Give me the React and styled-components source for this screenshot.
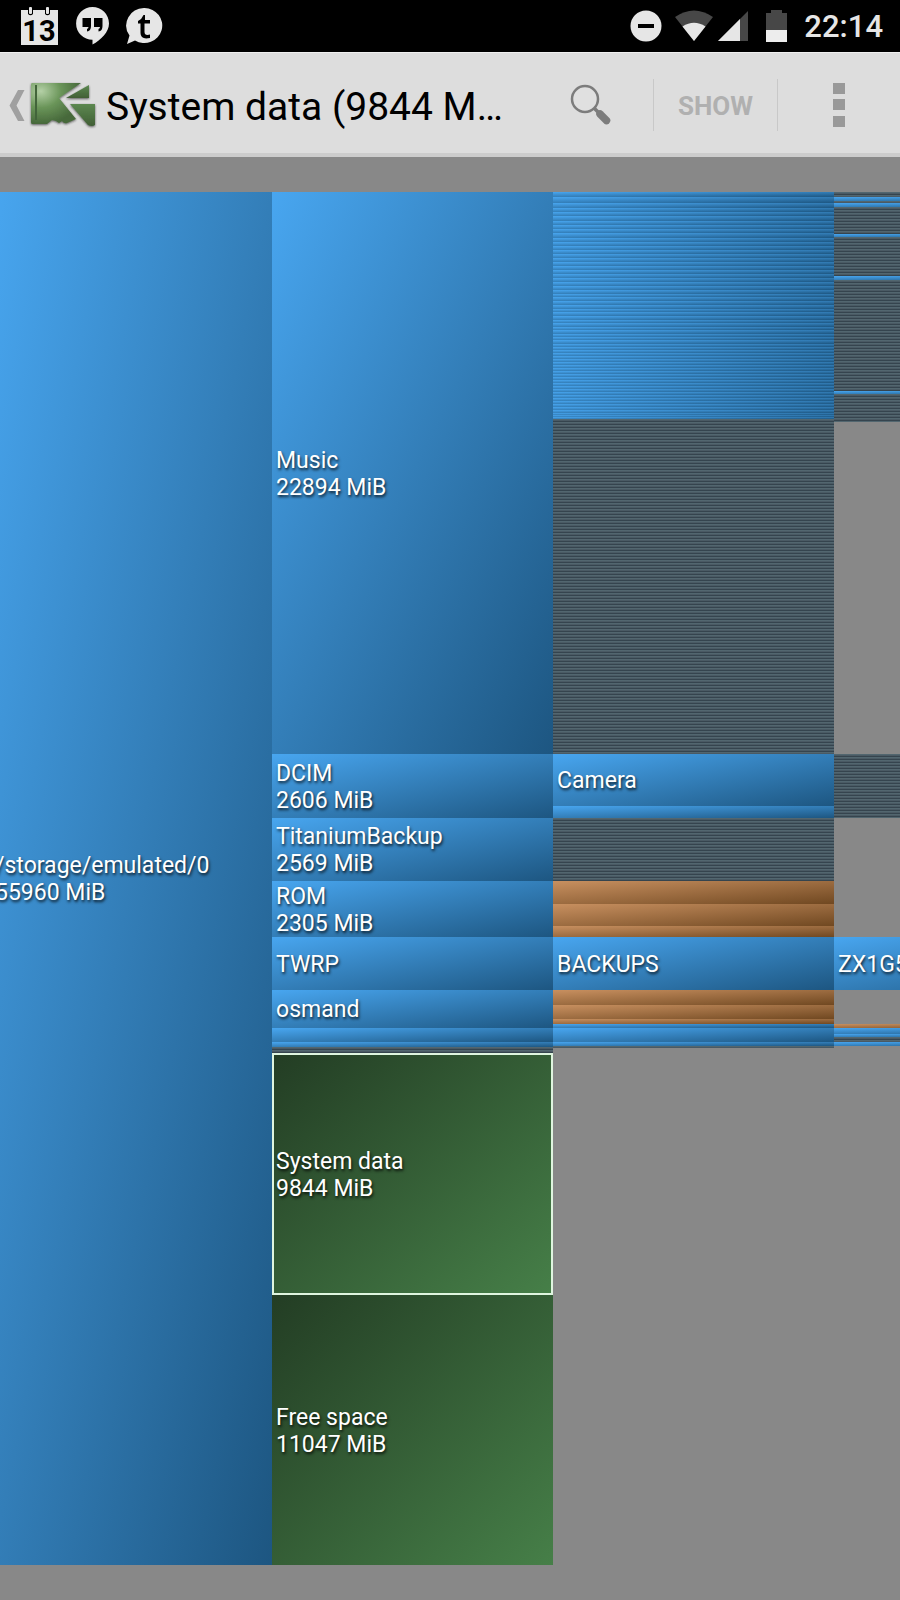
import React from "react";
import styled, { createGlobalStyle, css } from "styled-components";

const GlobalStyle = createGlobalStyle`
  * { box-sizing: border-box; }
  body {
    margin: 0;
    background: #888888;
    font-family: Roboto, "Liberation Sans", sans-serif;
  }
`;

const Page = styled.div`
  min-height: 100vh;
  overflow: hidden;
`;

const StatusBar = styled.header`
  display: flex;
  align-items: center;
  justify-content: space-between;
  height: 52px;
  padding: 0 17px 0 20px;
  background: #000;
  color: #e6e6e6;
`;

const StatusGroup = styled.div`
  display: flex;
  align-items: center;
  gap: ${(p) => p.$gap}px;
`;

const Clock = styled.time`
  padding-top: 2px;
  font-size: 31px;
  font-weight: 500;
  line-height: 50px;
`;

const ActionBar = styled.nav`
  display: flex;
  align-items: center;
  height: 105px;
  padding-top: 4px;
  background: #dddddd;
  border-top: 1px solid #f0f0f0;
  border-bottom: 4px solid #cccccc;
`;

const UpButton = styled.button`
  display: flex;
  align-items: center;
  flex: none;
  padding: 0;
  margin-left: 8px;
  border: 0;
  background: none;
`;

const Title = styled.h1`
  flex: 1;
  min-width: 0;
  margin: 0 0 0 8px;
  padding-top: 3px;
  font-size: 39px;
  font-weight: 400;
  line-height: 48px;
  color: #000;
  white-space: nowrap;
`;

const IconButton = styled.button`
  display: flex;
  align-items: center;
  justify-content: center;
  flex: none;
  width: ${(p) => p.$width}px;
  height: 80px;
  padding: 0;
  border: 0;
  background: none;
`;

const ShowButton = styled.button`
  flex: none;
  width: 125px;
  height: 52px;
  padding: 2px 0 0;
  border: solid #c8c8c8;
  border-width: 0 1px;
  background: none;
  color: #b0b0b0;
  font-family: inherit;
  font-size: 26px;
  font-weight: 700;
`;

const TreeMap = styled.main`
  display: grid;
  grid-template-columns: repeat(4, minmax(0, 1fr));
  width: 124.9%;
  margin: 35px 0 35px -9px;
`;

const Column = styled.div`
  min-width: 0;
`;

const fills = {
  blue: css`background: linear-gradient(to bottom right, #48a6f0, #337eb8 50%, #1d5681);`,
  green: css`background: linear-gradient(to bottom right, #233d24, #467f48);`,
  orange: css`background: linear-gradient(to bottom right, #c89060, #704821);`,
  dark: css`background: repeating-linear-gradient(#52666f 0 1px, #4a5a64 1px 2px, #35444e 2px 3px);`,
  none: css`background: none;`,
};

const Block = styled.section`
  display: flex;
  align-items: center;
  height: ${(p) => p.$height}px;
  padding: ${(p) => (p.$labelled ? "1px 4px 0" : "0")};
  overflow: hidden;
  ${(p) => fills[p.$fill]}
  ${(p) => p.$selected && css`
    border: 2px solid #dff5df;
    padding: 1px 2px 0;
  `}
`;

const Label = styled.p`
  margin: 0;
  font-size: 23px;
  line-height: 27px;
  color: #fff;
  white-space: pre;
  text-shadow: 1px 2px 3px rgba(0, 0, 0, 0.8);
`;

const musicFolders = [
  5, 6, 5, 4, 4, 5, 4, 4, 4, 5, 4, 4, 4, 4, 4, 4, 4, 4, 4, 4, 4, 4, 4, 4, 3, 4,
  4, 4, 3, 4, 4, 3, 4, 3, 4, 3, 3, 4, 3, 3, 3, 3, 3, 3, 3, 3, 3, 3, 3, 3, 3, 3,
  3, 3, 3, 3, 3, 3, 3, 3, 3, 2, 2, 2,
].map((h) => ["blue", h]);

const columns = [
  [["blue", 1373, "/storage/emulated/0\n55960 MiB"]],
  [
    ["blue", 562, "Music\n22894 MiB"],
    ["blue", 64, "DCIM\n2606 MiB"],
    ["blue", 63, "TitaniumBackup\n2569 MiB"],
    ["blue", 56, "ROM\n2305 MiB"],
    ["blue", 53, "TWRP"],
    ["blue", 38, "osmand"],
    ["blue", 14],
    ["blue", 5],
    ["dark", 6],
    ["green", 242, "System data\n9844 MiB", true],
    ["green", 270, "Free space\n11047 MiB"],
  ],
  [
    ...musicFolders,
    ["dark", 335],
    ["blue", 52, "Camera"],
    ["blue", 12],
    ["dark", 63],
    ["orange", 23],
    ["orange", 22],
    ["orange", 11],
    ["blue", 53, "BACKUPS"],
    ["orange", 15],
    ["orange", 14],
    ["orange", 5],
    ["blue", 4],
    ["blue", 14],
    ["blue", 4],
    ["dark", 2],
  ],
  [
    ["dark", 5],
    ["blue", 4],
    ["dark", 2],
    ["blue", 4],
    ["dark", 27],
    ["blue", 3],
    ["dark", 39],
    ["blue", 4],
    ["dark", 111],
    ["blue", 3],
    ["dark", 28],
    ["none", 332],
    ["dark", 64],
    ["none", 119],
    ["blue", 53, "ZX1G5"],
    ["none", 34],
    ["orange", 4],
    ["blue", 6],
    ["blue", 3],
    ["dark", 5],
    ["blue", 4],
  ],
];

function CalendarIcon() {
  return (
    <svg width="39" height="38" viewBox="0 0 39 38">
      <path d="M1 3H8V7Q10.500 9.500 13 7V3H25V7Q27.500 9.500 30 7V3H38V38H1Z" fill="#e6e6e6" />
      <rect x="9" y="0" width="3" height="7" rx="1" fill="#e6e6e6" />
      <rect x="26" y="0" width="3" height="7" rx="1" fill="#e6e6e6" />
      <text x="19" y="34" textAnchor="middle" fontSize="29" fontWeight="700" fill="#000">13</text>
    </svg>
  );
}

function HangoutsIcon() {
  return (
    <svg width="33" height="38" viewBox="0 0 33 38">
      <path d="M16.5 0A16.4 16.4 0 1 0 16.5 32.8V37.5C25 33 33 25 33 16.5A16.5 16.5 0 0 0 16.5 0Z" fill="#e6e6e6" />
      <path d="M6.500 11H15V19Q15 24 11 24.500V22Q12.500 21.500 12.500 20H6.500ZM18 11H26.500V19Q26.500 24 22.500 24.500V22Q24 21.500 24 20H18Z" fill="#000" />
    </svg>
  );
}

function TextIcon() {
  return (
    <svg width="37" height="37" viewBox="0 0 37 37">
      <path d="M18.500 0A18 17.500 0 1 1 9 32.500L1 36L3.500 27.500A18 17.500 0 0 1 18.500 0Z" fill="#e6e6e6" />
      <path d="M19 7V12H24V15.500H18.500V24Q18.500 27 21.500 27L24 26.500V30Q14.500 32 14.500 25V15.500H12V13Q16 11 17.500 7Z" fill="#000" />
    </svg>
  );
}

function DoNotDisturbIcon() {
  return (
    <svg width="32" height="32" viewBox="0 0 32 32">
      <circle cx="16" cy="16" r="15.500" fill="#e6e6e6" />
      <rect x="8" y="14" width="16" height="4" fill="#000" />
    </svg>
  );
}

function WifiIcon() {
  return (
    <svg width="40" height="32" viewBox="0 0 40 32">
      <path d="M1 7Q20-6 39 7L20 31Z" fill="#474747" />
      <path d="M8.500 16.500Q20 9 31.500 16.500L20 31Z" fill="#e6e6e6" />
    </svg>
  );
}

function SignalIcon() {
  return (
    <svg width="31" height="32" viewBox="0 0 31 32">
      <path d="M30 1V31H0Z" fill="#474747" />
      <path d="M22 9V31H0Z" fill="#e6e6e6" />
    </svg>
  );
}

function BatteryIcon() {
  return (
    <svg width="21" height="32" viewBox="0 0 21 32">
      <path d="M5 0H16V3H21V32H0V3H5Z" fill="#474747" />
      <rect y="20" width="21" height="12" fill="#ededed" />
    </svg>
  );
}

function UpIcon() {
  return (
    <svg width="18" height="34" viewBox="0 0 18 34">
      <path d="M10 2H16.500L8.500 17.500L16.500 33H10L1.500 17.500Z" fill="#a0a0a0" />
    </svg>
  );
}

function AppIcon() {
  return (
    <svg width="72" height="52" viewBox="0 0 72 52">
      <defs>
        <radialGradient id="card" cx="0.2" cy="0.2" r="0.8">
          <stop offset="0" stopColor="#b4d0a6" />
          <stop offset="0.5" stopColor="#6a9559" />
          <stop offset="1" stopColor="#47693b" />
        </radialGradient>
        <linearGradient id="slice" x1="0" y1="0" x2="0" y2="1">
          <stop offset="0" stopColor="#5c8850" />
          <stop offset="1" stopColor="#415f35" />
        </linearGradient>
        <filter id="soft" x="-10%" y="-10%" width="120%" height="130%">
          <feDropShadow dx="0" dy="1" stdDeviation="1" floodColor="#222" floodOpacity="0.7" />
        </filter>
      </defs>
      <g filter="url(#soft)">
        <path d="M6 4H55L33 19L50 40L41 44Q38 45 36 42L33 44L30 42L26 41L21 45H6Q5 45 5 43V6Q5 4 6 4Z" fill="url(#card)" />
        <path d="M63 6V19H40Z" fill="url(#slice)" />
        <path d="M44 25H69V46Q66 48 62 46Z" fill="url(#slice)" />
      </g>
      <path d="M10 6V41" stroke="#42643a" strokeWidth="2" />
    </svg>
  );
}

function SearchIcon() {
  return (
    <svg width="42" height="42" viewBox="0 0 42 42">
      <circle cx="15" cy="15" r="13" fill="#e0e0e0" stroke="#7c7c7c" strokeWidth="2.500" />
      <path d="M24 24L29 29" stroke="#7c7c7c" strokeWidth="3.500" />
      <path d="M30 30L36.500 36.500" stroke="#7c7c7c" strokeWidth="7.500" strokeLinecap="round" />
    </svg>
  );
}

function MoreIcon() {
  return (
    <svg width="12" height="44" viewBox="0 0 12 44">
      <path d="M0 0H12V11H0ZM0 16H12V27H0ZM0 33H12V44H0Z" fill="#999" />
    </svg>
  );
}

export default function App() {
  return (
    <Page>
      <GlobalStyle />
      <StatusBar>
        <StatusGroup $gap={17}>
          <CalendarIcon />
          <HangoutsIcon />
          <TextIcon />
        </StatusGroup>
        <StatusGroup $gap={17}>
          <StatusGroup $gap={12}>
            <DoNotDisturbIcon />
            <StatusGroup $gap={4}>
              <WifiIcon />
              <SignalIcon />
            </StatusGroup>
          </StatusGroup>
          <BatteryIcon />
          <Clock>22:14</Clock>
        </StatusGroup>
      </StatusBar>
      <ActionBar>
        <UpButton aria-label="Navigate up">
          <UpIcon />
          <AppIcon />
        </UpButton>
        <Title>System data (9844 M…</Title>
        <IconButton $width={124} aria-label="Search">
          <SearchIcon />
        </IconButton>
        <ShowButton disabled>SHOW</ShowButton>
        <IconButton $width={122} aria-label="More options">
          <MoreIcon />
        </IconButton>
      </ActionBar>
      <TreeMap>
        {columns.map((blocks, c) => (
          <Column key={c}>
            {blocks.map(([fill, height, label, selected], i) => (
              <Block
                key={i}
                $fill={fill}
                $height={height}
                $labelled={Boolean(label)}
                $selected={selected}
              >
                {label && <Label>{label}</Label>}
              </Block>
            ))}
          </Column>
        ))}
      </TreeMap>
    </Page>
  );
}
